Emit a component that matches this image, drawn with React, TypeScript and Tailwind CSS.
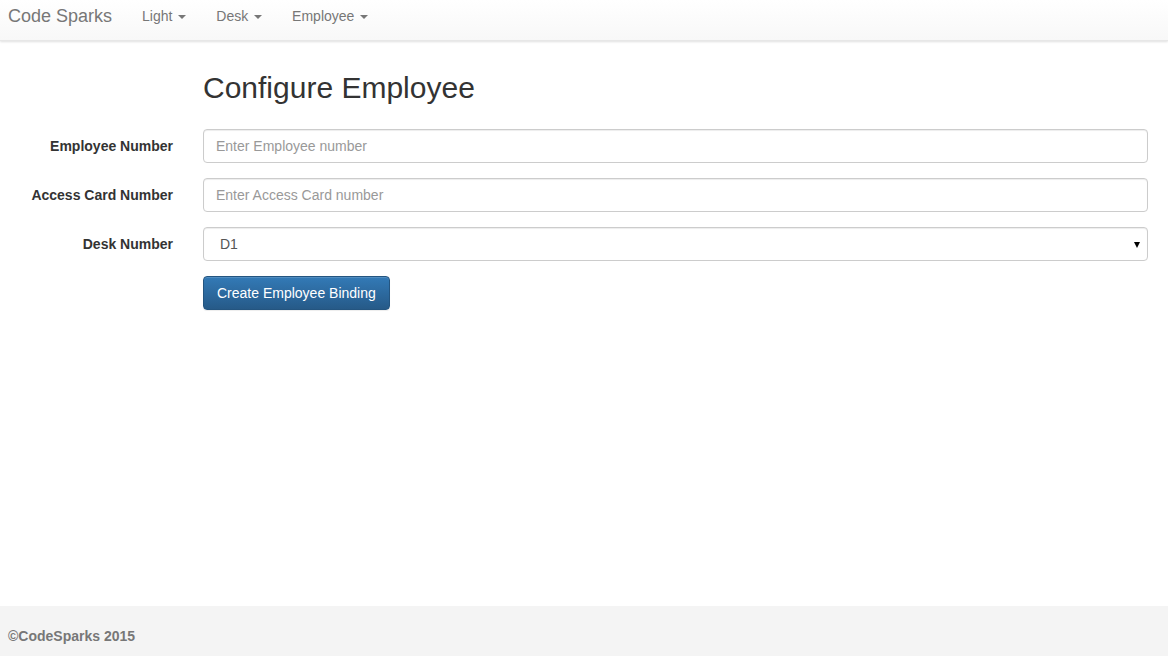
import React from 'react';

const font = { fontFamily: '"Liberation Sans", Arial, sans-serif' };

const Caret = () => (
  <span className="ml-[2px] inline-block h-0 w-0 border-x-[4px] border-t-[4px] border-x-transparent border-t-[#777] align-middle" />
);

const navItems = ['Light', 'Desk', 'Employee'];

const inputClass =
  'h-[34px] flex-1 rounded-[4px] border border-[#ccc] bg-white px-3 text-[14px] text-[#555] shadow-[inset_0_1px_1px_rgba(0,0,0,0.075)] outline-none placeholder:text-[#999]';

const Row = ({ label, children }: { label: string; children: React.ReactNode }) => (
  <div className="flex items-center">
    <label className="w-[203px] shrink-0 pr-[30px] text-right text-[14px] font-bold text-[#333]">
      {label}
    </label>
    {children}
  </div>
);

export default function App() {
  return (
    <div className="flex min-h-screen flex-col bg-white" style={font}>
      <nav className="flex h-[41px] items-start bg-gradient-to-b from-white to-[#f8f8f8] shadow-[0_1px_2px_rgba(0,0,0,0.12)] border-b border-[#e7e7e7]">
        <a className="px-[8px] pt-[6px] text-[18px] leading-[20px] text-[#777]">Code Sparks</a>
        <ul className="ml-[7px] flex">
          {navItems.map((item) => (
            <li key={item} className="px-[15px] pt-[6px] text-[14px] leading-[20px] text-[#777]">
              {item} <Caret />
            </li>
          ))}
        </ul>
      </nav>

      <main className="pt-[30px] pr-[20px]">
        <h2 className="ml-[203px] mb-[25px] text-[30px] leading-[33px] font-normal text-[#333]">
          Configure Employee
        </h2>
        <form className="flex flex-col gap-[15px]">
          <Row label="Employee Number">
            <input className={inputClass} placeholder="Enter Employee number" />
          </Row>
          <Row label="Access Card Number">
            <input className={inputClass} placeholder="Enter Access Card number" />
          </Row>
          <Row label="Desk Number">
            <div className="relative flex h-[34px] flex-1 items-center rounded-[4px] border border-[#ccc] bg-white pl-4 text-[14px] text-[#555] shadow-[inset_0_1px_1px_rgba(0,0,0,0.075)]">
              D1
              <span className="absolute right-[7px] top-[14px] h-0 w-0 border-x-[3.5px] border-t-[6px] border-x-transparent border-t-black" />
            </div>
          </Row>
          <div className="pl-[203px]">
            <button
              type="button"
              className="h-[34px] rounded-[4px] border border-[#245580] bg-gradient-to-b from-[#337ab7] to-[#265a88] px-[13px] text-[14px] text-white shadow-[inset_0_1px_0_rgba(255,255,255,0.15),0_1px_1px_rgba(0,0,0,0.075)]"
            >
              Create Employee Binding
            </button>
          </div>
        </form>
      </main>

      <footer className="mt-auto flex h-[50px] items-center bg-[#f4f4f4] px-[8px] pt-[10px]">
        <span className="text-[14px] font-bold text-[#777]">©CodeSparks 2015</span>
      </footer>
    </div>
  );
}
